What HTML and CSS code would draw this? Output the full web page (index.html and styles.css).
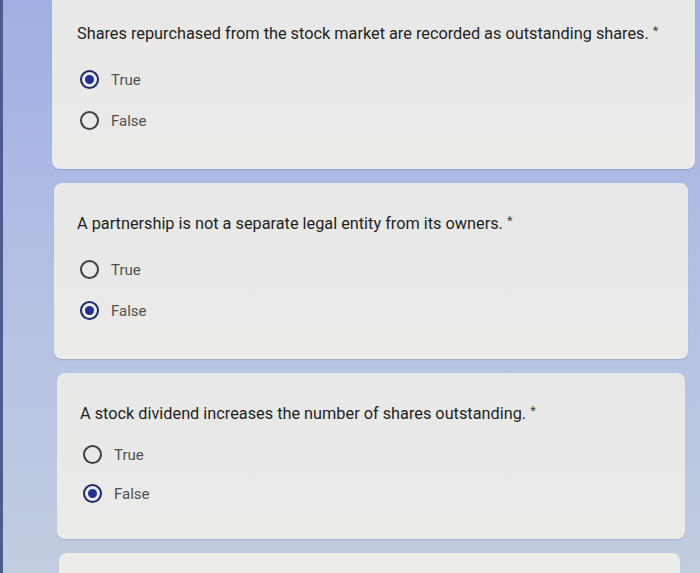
FILE: index.html
```html
<!DOCTYPE html>
<html lang="en">
<head>
<meta charset="utf-8">
<title>Quiz</title>
<link rel="stylesheet" href="styles.css">
</head>
<body>
<main class="form">
  <section class="card card-first">
    <p class="question">Shares repurchased from the stock market are recorded as outstanding shares. <span class="req">*</span></p>
    <div class="options">
      <label class="option"><span class="radio checked"></span><span class="label">True</span></label>
      <label class="option"><span class="radio"></span><span class="label">False</span></label>
    </div>
  </section>
  <section class="card">
    <p class="question">A partnership is not a separate legal entity from its owners. <span class="req">*</span></p>
    <div class="options">
      <label class="option"><span class="radio"></span><span class="label">True</span></label>
      <label class="option"><span class="radio checked"></span><span class="label">False</span></label>
    </div>
  </section>
  <section class="card card-compact">
    <p class="question">A stock dividend increases the number of shares outstanding. <span class="req">*</span></p>
    <div class="options">
      <label class="option"><span class="radio"></span><span class="label">True</span></label>
      <label class="option"><span class="radio checked"></span><span class="label">False</span></label>
    </div>
  </section>
  <section class="card card-last"></section>
</main>
</body>
</html>
```
FILE: styles.css
```css
html, body {
  margin: 0;
  padding: 0;
  height: 100%;
  overflow: hidden;
}
body {
  background: linear-gradient(180deg, #a0aee3 0%, #b2bfe4 45%, #c2cde0 100%);
  font-family: Roboto, "Noto Sans", sans-serif;
  border-left: 3px solid #4d5b8e;
  box-sizing: border-box;
}
.form {
  display: flex;
  flex-direction: column;
  gap: 14px;
  padding: 0 12px 0 51px;
}
.card {
  background: linear-gradient(180deg, #e7e8e7 0%, #ebebe8 100%);
  border-radius: 8px;
  padding: 26px 24px 28px 23px;
  box-shadow: 0 1px 1px rgba(80, 90, 130, 0.25);
}
.card-first {
  margin: -7px -7px 0 -2px;
  padding-left: 25px;
  border-radius: 0 0 8px 8px;
}
.card-compact {
  margin: 0 3px 0 3px;
  padding-bottom: 26px;
}
.card-compact .options {
  margin-top: 9px;
}
.card-compact .option {
  height: 39px;
}
.card-last {
  margin: 0 8px 0 5px;
  height: 40px;
  padding: 0;
  background: #ededea;
}
.question {
  margin: 0;
  font-size: 16.3px;
  line-height: 24px;
  color: #1f1f1f;
  white-space: nowrap;
}
.req {
  color: #444;
  font-size: 13px;
  vertical-align: 4px;
}
.options {
  display: flex;
  flex-direction: column;
  margin-top: 13px;
}
.option {
  display: flex;
  align-items: center;
  height: 41px;
  gap: 12px;
  padding-left: 3px;
}
.radio {
  box-sizing: border-box;
  width: 19px;
  height: 19px;
  border: 2px solid #3f3f3f;
  border-radius: 50%;
  display: flex;
  align-items: center;
  justify-content: center;
}
.radio.checked {
  border: 2.5px solid #1f2a66;
}
.radio.checked::after {
  content: "";
  width: 9px;
  height: 9px;
  border-radius: 50%;
  background: #22318f;
}
.label {
  font-size: 15px;
  color: #505050;
}
```
